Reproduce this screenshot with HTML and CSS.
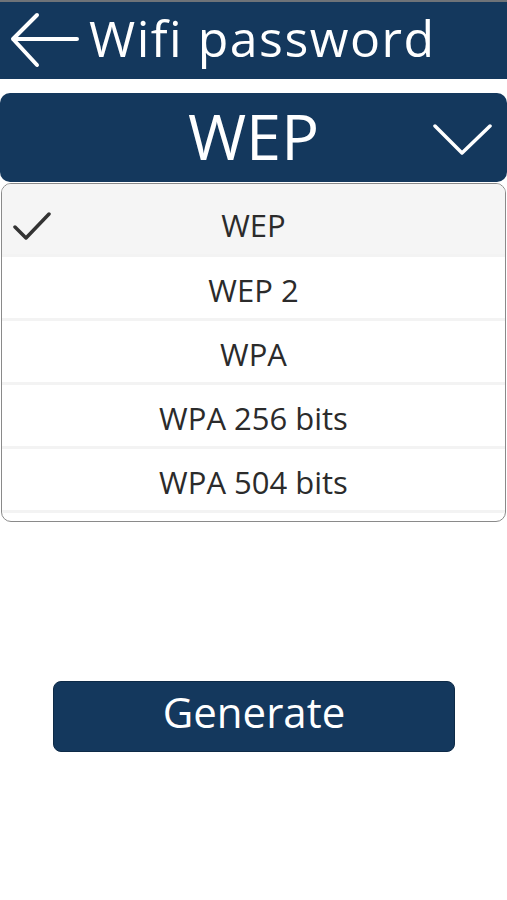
FILE: index.html
```html
<!DOCTYPE html>
<html lang="en">
<head>
  <meta charset="UTF-8" />
  <meta name="viewport" content="width=device-width, initial-scale=1.0" />
  <title>Wifi password</title>
  <link rel="stylesheet" href="styles.css">
</head>
<body>
  <div class="top-strip"></div>
  <header class="header">
    <svg class="back" width="72" height="58" viewBox="0 0 72 58">
      <path d="M70 27 H6 M30 3 L6 27 L30 53" fill="none" stroke="#fff" stroke-width="4" stroke-linecap="round" stroke-linejoin="round" />
    </svg>
    <h1 class="title">Wifi password</h1>
  </header>

  <div class="select">
    <span class="select-value">WEP</span>
    <svg class="chevron" width="60" height="34" viewBox="0 0 60 34">
      <path d="M2 4 L29 31 L57 4" fill="none" stroke="#fff" stroke-width="3.5" stroke-linecap="round" stroke-linejoin="round" />
    </svg>
  </div>

  <ul class="options">
    <li class="option selected">
      <svg class="check" width="38" height="32" viewBox="0 0 38 32">
        <path d="M2 17 L13 28 L36 4" fill="none" stroke="#333" stroke-width="3.5" stroke-linecap="round" stroke-linejoin="round" />
      </svg>
      WEP
    </li>
    <li class="option">WEP 2</li>
    <li class="option">WPA</li>
    <li class="option">WPA 256 bits</li>
    <li class="option">WPA 504 bits</li>
  </ul>

  <div class="actions">
    <button class="btn">Generate</button>
  </div>
</body>
</html>
```

FILE: styles.css
```css
body {
  font-family: 'Open Sans', sans-serif;
  margin: 0;
  padding: 0;
  background: #ffffff;
  width: 507px;
  min-height: 900px;
}

.top-strip {
  height: 2px;
  background: #6f7378;
}

.header {
  height: 77px;
  background: #14385d;
  display: flex;
  align-items: center;
  padding-left: 7px;
  gap: 10px;
}

.back {
  flex: none;
}

.title {
  margin: 0;
  color: #ffffff;
  font-size: 50px;
  font-weight: 400;
  letter-spacing: 1.5px;
  line-height: 1;
  padding-bottom: 6px;
}

.select {
  margin-top: 14px;
  height: 89px;
  background: #14385d;
  border-radius: 10px;
  position: relative;
  display: flex;
  align-items: center;
  justify-content: center;
}

.select-value {
  color: #ffffff;
  font-size: 63px;
  line-height: 1;
  padding-bottom: 4px;
}

.chevron {
  position: absolute;
  right: 14px;
  top: 29px;
}

.options {
  list-style: none;
  margin: 1px 1px 0;
  padding: 0 0 8px;
  border: 1.5px solid #8a8a8a;
  border-radius: 10px;
  overflow: hidden;
  background: #ffffff;
}

.option {
  height: 64px;
  box-sizing: border-box;
  display: flex;
  align-items: center;
  justify-content: center;
  padding-top: 4px;
  font-size: 31px;
  color: #2b2b2b;
  border-bottom: 3px solid #f3f3f3;
  position: relative;
}

.option.selected {
  height: 73px;
  padding-top: 12px;
  background: #f5f5f5;
}

.check {
  position: absolute;
  left: 11px;
  top: 26px;
}

.actions {
  display: flex;
  justify-content: center;
  margin-top: 159px;
}

.btn {
  width: 402px;
  height: 71px;
  margin-left: 1px;
  background: #14385d;
  color: #ffffff;
  border: 1px solid #0d2a47;
  border-radius: 8px;
  font-family: 'Open Sans', sans-serif;
  font-size: 42px;
  padding: 0 0 10px;
}
```
